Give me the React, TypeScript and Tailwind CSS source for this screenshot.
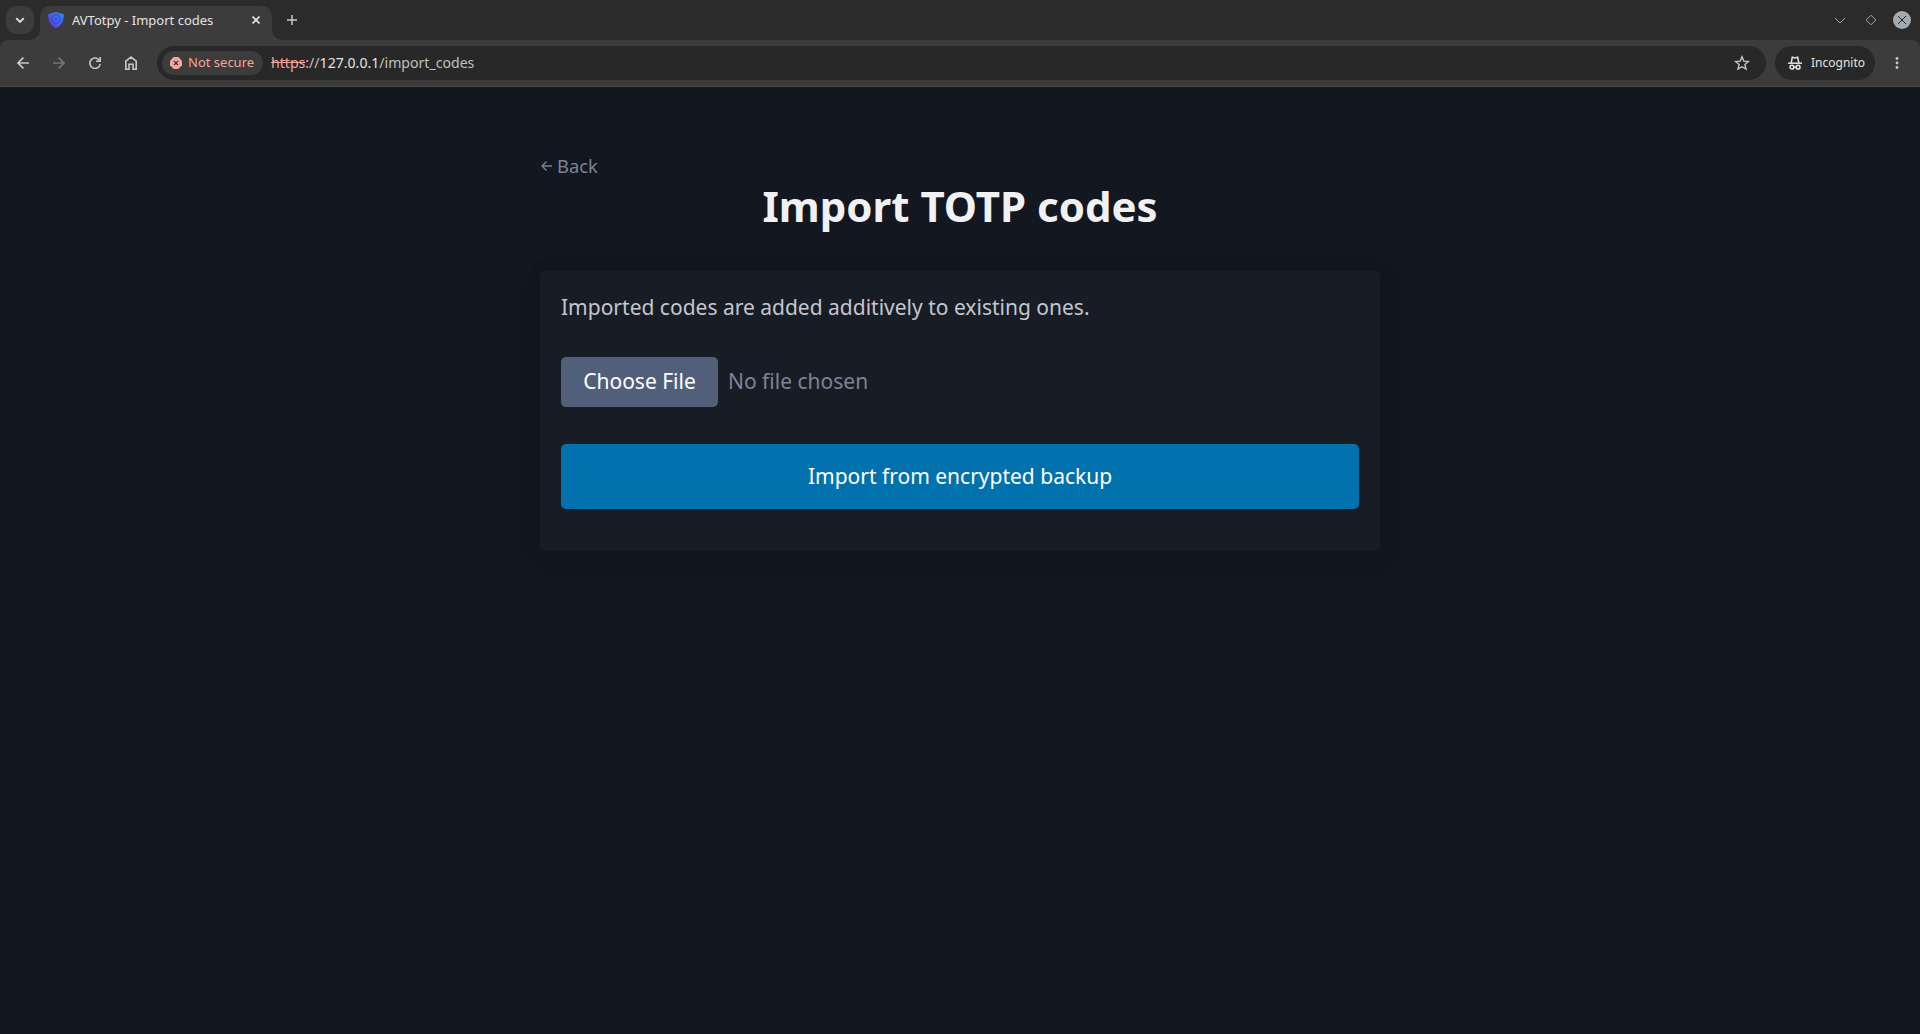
import React from "react";

interface IconProps {
  className?: string;
}

const ChevronDown: React.FC<IconProps> = ({ className = "" }) => (
  <svg viewBox="0 0 10 10" className={className} fill="none" stroke="currentColor" strokeWidth="1.8">
    <path d="M1.2 3.2 5 7l3.8-3.8" />
  </svg>
);

const ShieldLogo: React.FC<IconProps> = ({ className = "" }) => (
  <svg viewBox="0 0 16 16" className={className}>
    <defs>
      <linearGradient id="shield" x1="1" y1="0" x2="0" y2="1">
        <stop offset="0" stopColor="#2b8bf5" />
        <stop offset="0.55" stopColor="#4a5cf0" />
        <stop offset="1" stopColor="#5a2cf0" />
      </linearGradient>
    </defs>
    <path d="M8 0 15.8 2.2C16 8.2 14 13.2 8 16 2 13.2 0 8.2.2 2.2Z" fill="url(#shield)" />
    <circle cx="8" cy="7" r="4.3" fill="none" stroke="#3346c4" strokeWidth="0.9" />
    <path d="M5.8 5.5 8 8.2l2.2-2.7" fill="none" stroke="#3346c4" strokeWidth="0.9" />
  </svg>
);

const BackIcon: React.FC<IconProps> = ({ className = "" }) => (
  <svg viewBox="0 0 12 12" className={className} fill="none" stroke="currentColor" strokeWidth="1.7">
    <path d="M12 6H1.2M6.4.6 1 6l5.4 5.4" />
  </svg>
);

const ReloadIcon: React.FC<IconProps> = ({ className = "" }) => (
  <svg viewBox="0 0 12 12" className={className} fill="none" stroke="currentColor" strokeWidth="1.6">
    <path d="M10.6 3.7A5.2 5.2 0 1 0 11.2 7" />
    <path d="M11.2 0v4.2H7" />
  </svg>
);

const HomeIcon: React.FC<IconProps> = ({ className = "" }) => (
  <svg viewBox="0 0 12 14" className={className} fill="none" stroke="currentColor" strokeWidth="1.6">
    <path d="M.8 13.2V5.2L6 1.1l5.2 4.1v8H8V8.3H4v4.9Z" />
  </svg>
);

const StarIcon: React.FC<IconProps> = ({ className = "" }) => (
  <svg viewBox="0 0 16 16" className={className} fill="none" stroke="currentColor" strokeWidth="1.4">
    <path d="m8 1.8 1.8 4.3 4.6.4-3.5 3 1.1 4.6L8 11.7l-4 2.4 1.1-4.6-3.5-3 4.6-.4Z" />
  </svg>
);

const IncognitoIcon: React.FC<IconProps> = ({ className = "" }) => (
  <svg viewBox="0 0 14 14" className={className} fill="none" stroke="currentColor" strokeWidth="1.5">
    <path d="M0 7.2h14" />
    <path d="M3.2 7 4.3 1.3 7 2l2.7-.7L10.8 7" />
    <circle cx="3.9" cy="11.2" r="1.9" />
    <circle cx="10.1" cy="11.2" r="1.9" />
    <path d="M5.6 11h2.8" />
  </svg>
);

const TabStrip = () => (
  <div className="flex h-10 items-start bg-[#2b2b2b] pt-1.5 text-[#e3e3e3]">
    <button className="ml-1.5 flex size-7 items-center justify-center rounded-[10px] bg-[#3c3c3c]">
      <ChevronDown className="size-2.5" />
    </button>
    <div className="relative ml-1.5 flex h-[34px] w-[232px] items-center rounded-t-[10px] bg-[#3c3c3c] pb-1.5">
      {/* flared corners */}
      <span className="absolute bottom-0 -left-2.5 size-2.5 bg-[radial-gradient(circle_at_0_0,transparent_9.5px,#3c3c3c_10px)]" />
      <span className="absolute -right-2.5 bottom-0 size-2.5 bg-[radial-gradient(circle_at_100%_0,transparent_9.5px,#3c3c3c_10px)]" />
      <ShieldLogo className="ml-2 size-4" />
      <span className="ml-2 flex-1 text-[13px] leading-5">AVTotpy - Import codes</span>
      <svg viewBox="0 0 8 8" className="mr-3 size-2" stroke="currentColor" strokeWidth="1.6">
        <path d="m.5.5 7 7m0-7-7 7" />
      </svg>
    </div>
    <svg viewBox="0 0 10 10" className="mt-[9px] ml-[15px] size-2.5" stroke="#c7c7c7" strokeWidth="1.5">
      <path d="M5 0v10M0 5h10" />
    </svg>
    <div className="mr-[9px] ml-auto flex h-7 items-center text-[#a1a9b1]">
      <svg viewBox="0 0 12 12" className="size-3" fill="none" stroke="currentColor">
        <path d="m1 4 5 5 5-5" />
      </svg>
      <svg viewBox="0 0 12 12" className="ml-[19px] size-3" fill="none" stroke="currentColor">
        <path d="m6 1.2 4.8 4.8L6 10.8 1.2 6Z" />
      </svg>
      <svg viewBox="0 0 18 18" className="ml-4 size-[18px]" fill="none" stroke="#2b2b2b">
        <circle cx="9" cy="9" r="9" fill="#a1a9b1" stroke="none" />
        <path d="m5 5 8 8m0-8-8 8" />
      </svg>
    </div>
  </div>
);

const Toolbar = () => (
  <div className="bg-[#2b2b2b]">
    <div className="flex h-[47px] items-center rounded-t-[8px] border-b border-[#4a4a4a] bg-[#3c3c3c] text-[#c7c7c7]">
      <BackIcon className="ml-[17px] size-3" />
      <BackIcon className="ml-6 size-3 rotate-180 text-[#757575]" />
      <ReloadIcon className="ml-6 size-3" />
      <HomeIcon className="ml-6 h-3.5 w-3" />
      <div className="ml-5 flex h-[34px] flex-1 items-center rounded-full bg-[#282828] pr-4 pl-[5px]">
        <div className="flex h-6 w-[101px] items-center rounded-full bg-[#3c3c3c] pl-2 text-[#f6a59d]">
          <svg viewBox="0 0 12 12" className="size-3">
            <path d="M3.7 0h4.6L12 3.7v4.6L8.3 12H3.7L0 8.3V3.7Z" fill="currentColor" />
            <path d="m4 4 4 4m0-4-4 4" stroke="#3c3c3c" strokeWidth="1.3" />
          </svg>
          <span className="ml-1.5 text-[13px] whitespace-nowrap">Not secure</span>
        </div>
        <div className="ml-2 flex-1 text-[14.1px] leading-5 text-[#c0c0c0]">
          <span className="text-[#f6a59d] line-through">https</span>://
          <span className="text-[#e3e3e3]">127.0.0.1</span>/import_codes
        </div>
        <StarIcon className="size-4" />
      </div>
      <div className="ml-[9px] flex h-[34px] w-[100px] items-center rounded-full bg-[#282828] pl-[13px] text-[#e3e3e3]">
        <IncognitoIcon className="size-3.5" />
        <span className="ml-[9px] text-xs">Incognito</span>
      </div>
      <svg viewBox="0 0 4 12" className="mr-[21px] ml-5 h-3 w-1" fill="currentColor">
        <circle cx="2" cy="1.5" r="1.4" />
        <circle cx="2" cy="6" r="1.4" />
        <circle cx="2" cy="10.5" r="1.4" />
      </svg>
    </div>
  </div>
);

const ImportCodes = () => (
  <main className="mx-auto w-[840px] pt-[65px] text-[21px] leading-[31.5px] text-[#c2c7d0]">
    <a className="flex h-[27px] items-center text-[18.375px] leading-[27px] text-[#7b8495]">
      <svg viewBox="0 0 11 10" className="mr-[5px] ml-px h-2.5 w-[11px]" fill="none" stroke="currentColor" strokeWidth="1.3">
        <path d="M11 5H1M5.5.5 1 5l4.5 4.5" />
      </svg>
      Back
    </a>
    <h1 className="mt-[3px] text-center text-[42px] leading-[47px] font-bold text-[#f0f1f3]">
      Import TOTP codes
    </h1>
    {/* Card */}
    <article className="mt-[42px] h-[280px] rounded-[5px] bg-[#181c25] p-[21px] shadow-[2px_5px_28px_rgba(7,9,12,0.06),4px_9px_52px_rgba(7,9,12,0.04)]">
      <p>Imported codes are added additively to existing ones.</p>
      <div className="mt-[33.5px] flex items-center">
        <button className="h-[50px] w-[157px] rounded-[5px] bg-[#525f7a] text-white">
          Choose File
        </button>
        <span className="ml-[10px] text-[#7b8495]">No file chosen</span>
      </div>
      <button className="mt-[37px] h-[65px] w-full rounded-[5px] bg-[#0172ad] text-white">
        Import from encrypted backup
      </button>
    </article>
  </main>
);

const App: React.FC = () => {
  return (
    <div className="h-[1034px] overflow-hidden bg-[#13171f] font-['Noto_Sans',sans-serif]">
      <TabStrip />
      <Toolbar />
      <ImportCodes />
    </div>
  );
};

export default App;
